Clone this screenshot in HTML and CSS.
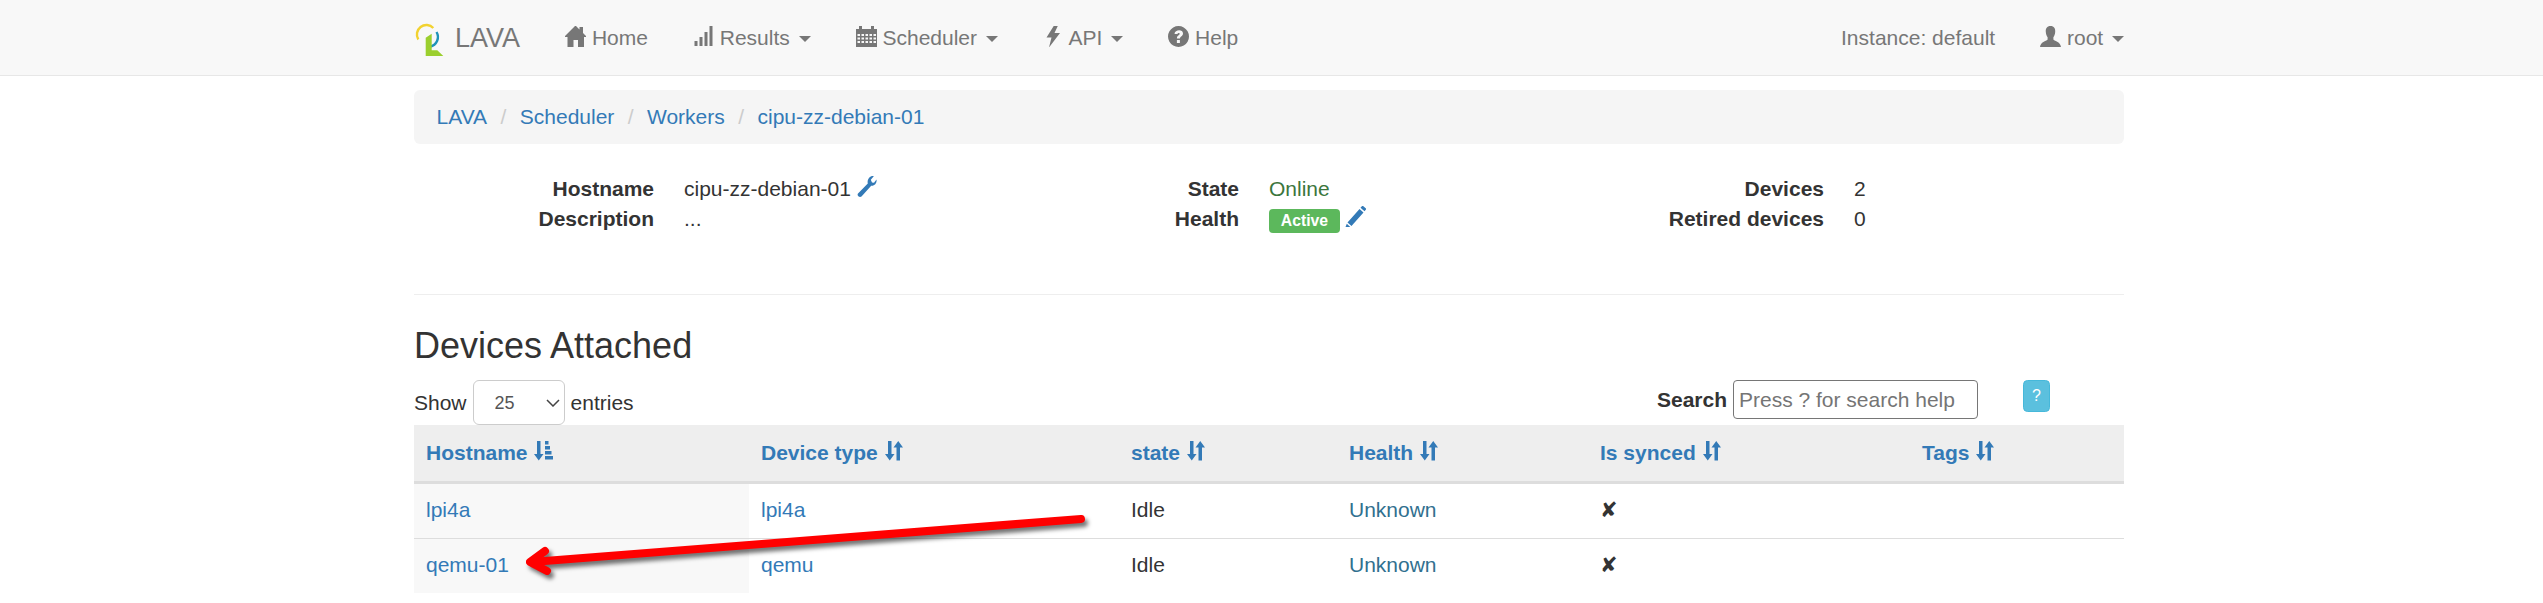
FILE: index.html
```html
<!DOCTYPE html>
<html lang="en">
<head>
  <meta charset="UTF-8" />
  <title>LAVA | Worker cipu-zz-debian-01</title>
  <link rel="stylesheet" href="styles.css">
</head>
<body>
  <svg class="icon-defs" xmlns="http://www.w3.org/2000/svg">
    <symbol id="i-home" viewBox="0 0 21 21"><path d="M10.5 -.5 14.5 3.5V1H18V7L22 11H19V21H13V14H8.5V21H2.5V11H-1Z"/></symbol>
    <symbol id="i-results" viewBox="0 0 21 21"><path d="M1.5 15H4.5V20H1.5ZM6.5 11H9.500V20H6.500ZM11.500 6H14.500V20H11.500ZM16.500 0H19.500V20H16.500Z"/></symbol>
    <symbol id="i-calendar" viewBox="0 0 21 21"><path fill-rule="evenodd" d="M-.5 3H3V0H6V3H15V0H18V3H21.500V21H-.5ZM1.500 8V10H4V8ZM5.500 8V10H8V8ZM9.500 8V10H12V8ZM13.500 8V10H16V8ZM17.500 8V10H20V8ZM1.500 11.500V13.500H4V11.500ZM5.500 11.500V13.500H8V11.500ZM9.500 11.500V13.500H12V11.500ZM13.500 11.500V13.500H16V11.500ZM17.500 11.500V13.500H20V11.500ZM1.500 15V17H4V15ZM5.500 15V17H8V15ZM9.500 15V17H12V15ZM13.500 15V17H16V15ZM17.500 15V17H20V15Z"/></symbol>
    <symbol id="i-flash" viewBox="0 0 21 21"><path d="M11 -.5 3.500 11.500H8.500L6 21.500 17 7H11.500L15 -.5Z"/></symbol>
    <symbol id="i-help" viewBox="0 0 21 21"><path fill-rule="evenodd" d="M10.500 0A10.500 10.500 0 1 1 10.499 0ZM6.500 8H9.500C9.600 6.700 11.700 6.600 11.800 7.800 11.800 9 8.900 9.500 8.900 12.500H11.900C12 10.400 15 10 15 7.400 15 3 6.800 3.200 6.500 8ZM8.900 14V17H11.900V14Z"/></symbol>
    <symbol id="i-user" viewBox="0 0 21 21"><path d="M10.500 0C14 0 15.500 2.500 15.200 6 15 8.500 14.300 10 13.400 11.200V13.500C13.800 15 20.500 15.500 21 21H0C.5 15.500 7.200 15 7.600 13.500V11.200C6.700 10 6 8.500 5.800 6 5.500 2.500 7 0 10.500 0Z"/></symbol>
    <symbol id="i-wrench" viewBox="0 0 21 21"><path d="M20.500 3.500C21 6.500 19 10 15.200 9.700L5.500 20.500C3.500 22 .5 19.500 2 17.500L11.800 7.500C10.800 3.500 14 -.5 17.800 .2L14.800 3.800 16 6.500 18 6.800Z"/></symbol>
    <symbol id="i-pencil" viewBox="0 0 21 21"><path d="M17.500 -.5 21.500 3 19.500 5.300 15.500 1.800ZM14.500 3 18.500 6.500 6.500 20 2.500 16.500ZM1.800 17.800 5.300 21-.5 23.500Z"/></symbol>
    <symbol id="i-sort" viewBox="0 0 21 21"><path d="M4 0H7.500V13H10.500L5.750 19.500 1 13H4ZM12.500 6.500H9.500L14.250 0 19 6.500H16V19.500H12.500Z"/></symbol>
    <symbol id="i-sort-asc" viewBox="0 0 21 21"><path d="M4 0H7.500V13H10.500L5.750 19.500 1 13H4ZM12 0H15.500V3.500H12ZM12 5H17V8.500H12ZM12 10H18.500V13.500H12ZM12 15H20V18.500H12Z"/></symbol>
  </svg>

  <nav class="navbar">
    <div class="container navbar-inner">
      <a class="brand" href="#">
        <svg class="logo" viewBox="0 0 27 32" xmlns="http://www.w3.org/2000/svg">
          <path class="logo-yellow" d="M1.300 14.500A9.500 9.500 0 0 1 16.300 3"/>
          <path class="logo-blue" d="M19.500 7A9.800 9.800 0 0 1 13 21.700"/>
          <path class="logo-green" d="M8.700 12.700 14.700 8.700V25.300H20.300L26.300 31H8.700Z"/>
        </svg>
        LAVA
      </a>
      <ul class="nav">
        <li><a href="#"><svg class="icon"><use href="#i-home"/></svg> Home</a></li>
        <li><a href="#"><svg class="icon"><use href="#i-results"/></svg> Results <b class="caret"></b></a></li>
        <li><a href="#"><svg class="icon"><use href="#i-calendar"/></svg> Scheduler <b class="caret"></b></a></li>
        <li><a href="#"><svg class="icon"><use href="#i-flash"/></svg> API <b class="caret"></b></a></li>
        <li><a href="#"><svg class="icon"><use href="#i-help"/></svg> Help</a></li>
      </ul>
      <ul class="nav nav-right">
        <li><a href="#">Instance: default</a></li>
        <li><a href="#"><svg class="icon"><use href="#i-user"/></svg> root <b class="caret"></b></a></li>
      </ul>
    </div>
  </nav>

  <div class="container">
    <ol class="breadcrumb">
      <li><a href="#">LAVA</a></li>
      <li><a href="#">Scheduler</a></li>
      <li><a href="#">Workers</a></li>
      <li><a href="#">cipu-zz-debian-01</a></li>
    </ol>

    <div class="info-row">
      <dl class="info">
        <dt>Hostname</dt>
        <dd>cipu-zz-debian-01 <a href="#"><svg class="icon icon-tight"><use href="#i-wrench"/></svg></a></dd>
        <dt>Description</dt>
        <dd>...</dd>
      </dl>
      <dl class="info">
        <dt>State</dt>
        <dd class="text-success">Online</dd>
        <dt>Health</dt>
        <dd><span class="label">Active</span> <a href="#"><svg class="icon icon-tight"><use href="#i-pencil"/></svg></a></dd>
      </dl>
      <dl class="info">
        <dt>Devices</dt>
        <dd>2</dd>
        <dt>Retired devices</dt>
        <dd>0</dd>
      </dl>
    </div>

    <hr>

    <h3>Devices Attached</h3>

    <div class="table-tools">
      <label class="length">Show
        <span class="select-wrap">
          <select><option>25</option></select>
          <svg class="chevron" viewBox="0 0 14 8" xmlns="http://www.w3.org/2000/svg"><path d="M1 1 7 7 13 1"/></svg>
        </span>
        entries</label>
      <label class="search"><b>Search</b><input type="text" placeholder="Press ? for search help"></label>
      <button class="btn-help">?</button>
    </div>

    <table class="devices">
      <colgroup>
        <col class="col-host"><col class="col-type"><col class="col-state"><col class="col-health"><col class="col-sync"><col class="col-tags">
      </colgroup>
      <thead>
        <tr>
          <th>Hostname <svg class="icon"><use href="#i-sort-asc"/></svg></th>
          <th>Device type <svg class="icon"><use href="#i-sort"/></svg></th>
          <th>state <svg class="icon"><use href="#i-sort"/></svg></th>
          <th>Health <svg class="icon"><use href="#i-sort"/></svg></th>
          <th>Is synced <svg class="icon"><use href="#i-sort"/></svg></th>
          <th>Tags <svg class="icon"><use href="#i-sort"/></svg></th>
        </tr>
      </thead>
      <tbody>
        <tr>
          <td class="sorted"><a href="#">lpi4a</a></td>
          <td><a href="#">lpi4a</a></td>
          <td>Idle</td>
          <td><a class="text-info" href="#">Unknown</a></td>
          <td class="cross">&#x2718;</td>
          <td></td>
        </tr>
        <tr>
          <td class="sorted"><a href="#">qemu-01</a></td>
          <td><a href="#">qemu</a></td>
          <td>Idle</td>
          <td><a class="text-info" href="#">Unknown</a></td>
          <td class="cross">&#x2718;</td>
          <td></td>
        </tr>
      </tbody>
    </table>
  </div>

  <!-- annotation drawn on top of the screenshot -->
  <svg class="arrow" viewBox="0 0 2543 603" xmlns="http://www.w3.org/2000/svg">
    <path d="M1081 519 532 562"/>
    <path d="M545 551 530 562 547 571"/>
  </svg>
</body>
</html>
```

FILE: styles.css
```css
* {
  box-sizing: border-box;
}
html, body {
  height: 603px;
  overflow: hidden;
}
body {
  margin: 0;
  position: relative;
  background: #fff;
  color: #333;
  font-family: "Liberation Sans", Arial, sans-serif;
  font-size: 21px;
  line-height: 30px;
}
a {
  color: #337ab7;
  text-decoration: none;
}
.icon-defs {
  display: none;
}
.icon {
  width: 21px;
  height: 21px;
  fill: currentColor;
  vertical-align: -2px;
  overflow: visible;
}
.container {
  width: 1710px;
  margin-left: 414px;
}

/* navbar */
.navbar {
  height: 76px;
  margin-bottom: 14px;
  background: #f8f8f8;
  border-bottom: 1px solid #e7e7e7;
}
.navbar-inner {
  display: flex;
}
.navbar a {
  display: block;
  padding: 22.5px;
  color: #777;
}
.navbar .brand {
  display: flex;
  align-items: center;
  gap: 11px;
  height: 75px;
  padding: 0 22.5px 0 0;
  font-size: 27px;
}
.logo {
  width: 27px;
  height: 32px;
  margin: 6px 0 0 3px;
  fill: none;
  overflow: visible;
}
.logo-yellow {
  stroke: #f2d230;
  stroke-width: 2.4;
}
.logo-blue {
  stroke: #1f93b8;
  stroke-width: 2.4;
}
.logo-green {
  fill: #9bcf2e;
}
.nav {
  display: flex;
  margin: 0;
  padding: 0;
  list-style: none;
}
.nav-right {
  margin-left: auto;
}
.navbar .nav-right li:last-child a {
  padding-right: 0;
}
.caret {
  display: inline-block;
  margin-left: 3px;
  vertical-align: middle;
  border-top: 6px solid;
  border-left: 6px solid transparent;
  border-right: 6px solid transparent;
}

/* breadcrumb */
.breadcrumb {
  display: flex;
  height: 54px;
  margin: 0 0 30px;
  padding: 12px 22.5px;
  list-style: none;
  background: #f5f5f5;
  border-radius: 6px;
}
.breadcrumb li + li {
  margin-left: 6px;
}
.breadcrumb li + li::before {
  content: "/\00a0";
  padding: 0 7.5px;
  color: #ccc;
}

/* worker info */
.info-row {
  display: grid;
  grid-template-columns: 585px 585px 540px;
}
.info {
  display: grid;
  grid-template-columns: 240px 1fr;
  grid-auto-rows: 30px;
  column-gap: 30px;
  margin: 0 0 60px;
}
.info dt {
  font-weight: 700;
  text-align: right;
}
.info dd {
  margin: 0;
}
.icon-tight {
  margin-left: -1px;
  vertical-align: -1px;
}
.text-success {
  color: #3c763d;
}
.text-info {
  color: #31708f;
}
.label {
  display: inline-block;
  width: 71px;
  height: 24px;
  background: #5cb85c;
  border-radius: 4px;
  color: #fff;
  font-size: 15.75px;
  font-weight: 700;
  line-height: 24px;
  text-align: center;
}

hr {
  height: 1px;
  margin: 0 0 30px;
  border: 0;
  background: #eee;
}
h3 {
  margin: 0 0 14px;
  padding-top: 1px;
  font-size: 36px;
  font-weight: 500;
  line-height: 40px;
}

/* table tools */
.table-tools {
  display: flex;
  align-items: flex-start;
  height: 45px;
}
.length {
  display: flex;
  align-items: center;
  gap: 6px;
  height: 45px;
}
.select-wrap {
  position: relative;
  display: block;
  width: 92px;
  height: 45px;
}
.select-wrap select {
  width: 100%;
  height: 100%;
  padding: 0 0 0 21px;
  appearance: none;
  background: #fff;
  border: 1px solid #ccc;
  border-radius: 6px;
  color: #555;
  font: 18px "Liberation Sans", Arial, sans-serif;
}
.chevron {
  position: absolute;
  right: 5px;
  top: 19px;
  width: 14px;
  height: 8px;
  fill: none;
  stroke: #444;
  stroke-width: 1.5;
}
.search {
  display: flex;
  align-items: center;
  gap: 6px;
  height: 39px;
  margin-left: auto;
}
.search input {
  width: 245px;
  height: 39px;
  padding: 0 5px;
  background: #fff;
  border: 1px solid #767676;
  border-radius: 4px;
  color: #333;
  font: 21px "Liberation Sans", Arial, sans-serif;
}
.search input::placeholder {
  color: #757575;
}
.btn-help {
  width: 27px;
  height: 32px;
  margin: 0 74px 0 45px;
  padding: 0;
  background: #5bc0de;
  border: 1px solid #46b8da;
  border-radius: 4.5px;
  color: #fff;
  font: 16px "Liberation Sans", Arial, sans-serif;
}

/* devices table */
.devices {
  width: 1710px;
  table-layout: fixed;
  border-collapse: collapse;
}
.col-host { width: 335px; }
.col-type { width: 370px; }
.col-state { width: 218px; }
.col-health { width: 251px; }
.col-sync { width: 322px; }
.col-tags { width: 214px; }
.devices th {
  height: 57px;
  padding: 12px;
  background: #eee;
  border-bottom: 3px solid #ddd;
  color: #337ab7;
  font-weight: 700;
  text-align: left;
  white-space: nowrap;
}
.devices td {
  height: 55px;
  padding: 11px 12px 13px;
  border-bottom: 1px solid #ddd;
}
.devices tr:last-child td {
  height: 54px;
  border-bottom: 0;
}
.devices .sorted {
  background: #f8f8f8;
}
.cross {
  font-family: "DejaVu Sans", sans-serif;
}

/* annotation */
.arrow {
  position: absolute;
  left: 0;
  top: 0;
  width: 2543px;
  height: 603px;
  fill: none;
  stroke: #f00;
  stroke-width: 8;
  stroke-linecap: round;
  stroke-linejoin: round;
  filter: drop-shadow(3px 4px 2px rgba(0, 0, 0, 0.55));
  pointer-events: none;
}
```
